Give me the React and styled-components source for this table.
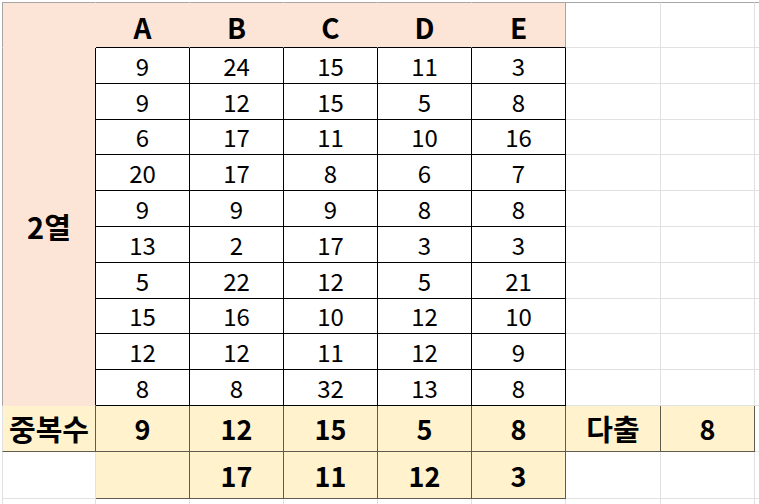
import React from "react";
import styled, { createGlobalStyle } from "styled-components";

const GlobalStyle = createGlobalStyle`
  html, body {
    margin: 0;
    padding: 0;
    background: #fff;
  }
  body {
    font-family: "Noto Sans CJK KR", "Noto Sans", sans-serif;
    color: #000;
  }
`;

const GRID = "#e1e1e1";
const PEACH = "#fce4d6";
const YELLOW = "#fff2cc";
const YELLOW_LINE = "#5f5b4e";

const Sheet = styled.div`
  display: grid;
  grid-template-columns: 94px repeat(5, 94px) 95px 94px 20px;
  grid-template-rows: 46px repeat(10, 35.8px) 46px 47px 20px;
  padding: 2px 0 0 2px;
  width: 759px;
  height: 504px;
  overflow: hidden;
  box-sizing: border-box;
`;

const Cell = styled.div`
  display: flex;
  align-items: center;
  justify-content: center;
  box-sizing: border-box;
  grid-row: ${(p) => p.$row} / span ${(p) => p.$rowSpan || 1};
  grid-column: ${(p) => p.$col};
  font-size: ${(p) => (p.$bold ? "27px" : "24px")};
  font-weight: ${(p) => (p.$bold ? 700 : 400)};
  line-height: 1;
  padding-top: 1px;
  background: ${(p) =>
    p.$kind === "peach" ? PEACH : p.$kind === "yellow" ? YELLOW : "#fff"};
  border-right: 1px solid
    ${(p) =>
      p.$kind === "data"
        ? "#000"
        : p.$kind === "yellow"
        ? YELLOW_LINE
        : p.$kind === "peach"
        ? p.$edge
          ? "#000"
          : PEACH
        : GRID};
  border-bottom: 1px solid
    ${(p) =>
      p.$kind === "data"
        ? "#000"
        : p.$kind === "yellow"
        ? YELLOW_LINE
        : p.$kind === "peach"
        ? p.$under
          ? "#000"
          : PEACH
        : GRID};
  border-top: ${(p) => (p.$row === 1 ? `1px solid #a6a6a6` : "0")};
  border-left: ${(p) =>
    p.$col === 1 ? `1px solid ${p.$kind === "peach" ? "#a6a6a6" : GRID}` : "0"};
`;

const HeaderCell = styled(Cell)`
  font-size: 28px;
  font-weight: 700;
  padding-top: 3px;
  border-right-color: ${(p) => (p.$last ? "#a6a6a6" : PEACH)};
`;

const LabelCell = styled(Cell)`
  font-size: 29px;
  font-weight: 700;
`;

const data = [
  [9, 24, 15, 11, 3],
  [9, 12, 15, 5, 8],
  [6, 17, 11, 10, 16],
  [20, 17, 8, 6, 7],
  [9, 9, 9, 8, 8],
  [13, 2, 17, 3, 3],
  [5, 22, 12, 5, 21],
  [15, 16, 10, 12, 10],
  [12, 12, 11, 12, 9],
  [8, 8, 32, 13, 8],
];

const dupes = [9, 12, 15, 5, 8];
const lastRow = ["", 17, 11, 12, 3];
const letters = ["A", "B", "C", "D", "E"];

function App() {
  const cells = [];

  // header row
  cells.push(<Cell key="h0" $row={1} $col={1} $kind="peach" />);
  letters.forEach((l, i) => {
    cells.push(
      <HeaderCell key={"h" + l} $row={1} $col={i + 2} $kind="peach" $under $last={i === 4}>
        {l}
      </HeaderCell>
    );
  });
  [7, 8, 9].forEach((c) => cells.push(<Cell key={"he" + c} $row={1} $col={c} />));

  // merged label column
  cells.push(
    <LabelCell key="label" $row={2} $rowSpan={10} $col={1} $kind="peach" $edge>
      2열
    </LabelCell>
  );

  data.forEach((row, r) => {
    row.forEach((v, c) => {
      cells.push(
        <Cell key={`d${r}-${c}`} $row={r + 2} $col={c + 2} $kind="data">
          {v}
        </Cell>
      );
    });
    [7, 8, 9].forEach((c) =>
      cells.push(<Cell key={`de${r}-${c}`} $row={r + 2} $col={c} />)
    );
  });

  // 중복수 row
  cells.push(
    <LabelCell key="dupLabel" $row={12} $col={1} $kind="yellow">
      중복수
    </LabelCell>
  );
  dupes.forEach((v, c) =>
    cells.push(
      <Cell key={"dup" + c} $row={12} $col={c + 2} $kind="yellow" $bold>
        {v}
      </Cell>
    )
  );
  cells.push(
    <LabelCell key="most" $row={12} $col={7} $kind="yellow">
      다출
    </LabelCell>
  );
  cells.push(
    <Cell key="mostVal" $row={12} $col={8} $kind="yellow" $bold>
      8
    </Cell>
  );
  cells.push(<Cell key="dupE" $row={12} $col={9} />);

  // bottom row
  cells.push(<Cell key="b0" $row={13} $col={1} />);
  lastRow.forEach((v, c) =>
    cells.push(
      <Cell key={"b" + c} $row={13} $col={c + 2} $kind="yellow" $bold>
        {v}
      </Cell>
    )
  );
  [7, 8, 9].forEach((c) => cells.push(<Cell key={"be" + c} $row={13} $col={c} />));

  for (let c = 1; c <= 9; c++) {
    cells.push(<Cell key={"x" + c} $row={14} $col={c} />);
  }

  return (
    <>
      <GlobalStyle />
      <Sheet>{cells}</Sheet>
    </>
  );
}

export default App;
